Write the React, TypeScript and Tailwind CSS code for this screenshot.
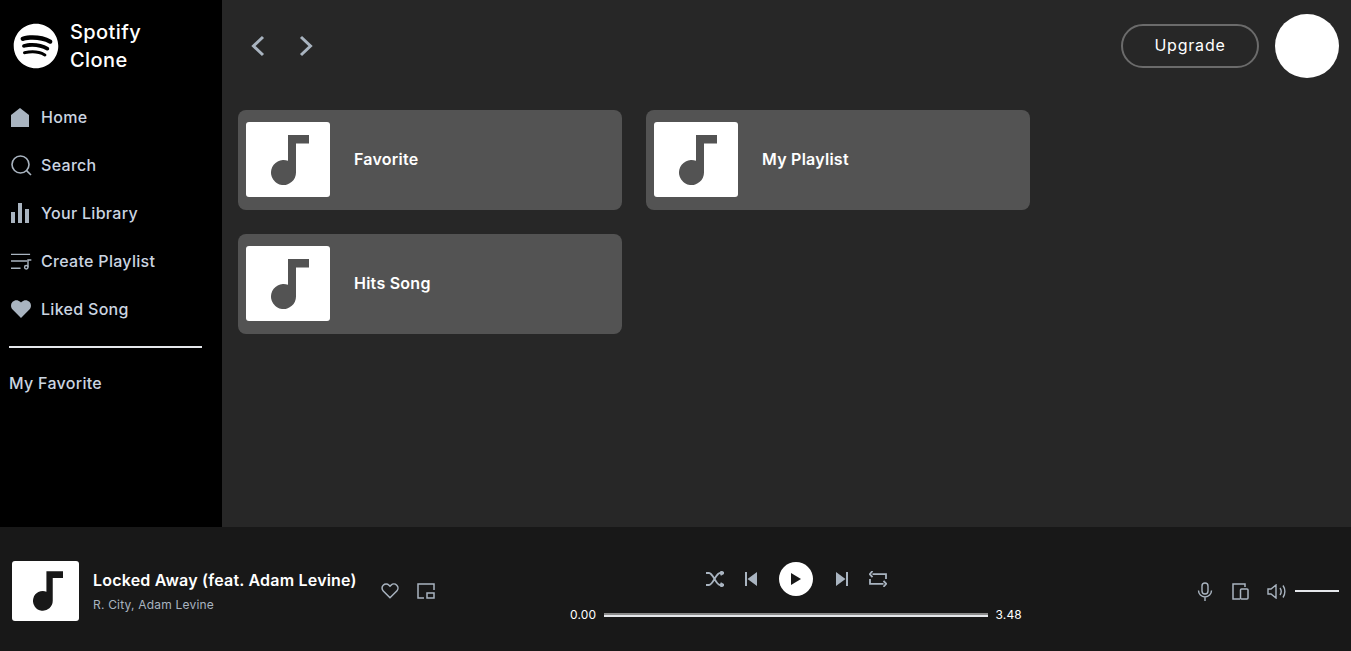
import { FaSpotify } from 'react-icons/fa'

const Note = ({ className }: { className: string }) => (
  <svg viewBox="0 0 38 50" className={className} fill="currentColor">
    <path d="M17 0h21v8.500H25v29a12.500 12.500 0 1 1-8-11.660V0z" />
  </svg>
)

const HomeIcon = () => (
  <svg viewBox="0 0 18 19" className="w-[18px] h-[19px]" fill="#a9b4c0">
    <path d="M9 0l9 7v12H0V7z" />
  </svg>
)

const SearchIcon = () => (
  <svg viewBox="0 0 21 21" className="w-[21px] h-[21px]" fill="none" stroke="#a9b4c0" strokeWidth="1.6">
    <circle cx="9.500" cy="9.500" r="8.500" />
    <path d="M15.600 15.600L20 20" />
  </svg>
)

const LibraryIcon = () => (
  <svg viewBox="0 0 18 20" className="w-[18px] h-[20px]" fill="#a9b4c0">
    <rect x="0" y="9" width="4" height="11" />
    <rect x="7" y="0" width="4" height="20" />
    <rect x="14" y="6" width="4" height="14" />
  </svg>
)

const PlaylistIcon = () => (
  <svg viewBox="0 0 22 17" className="w-[21px] h-[17px]" fill="none" stroke="#a9b4c0" strokeWidth="1.500">
    <path d="M0 1h20M0 8h17M0 15.500h10" />
    <circle cx="16" cy="14.500" r="1.800" />
    <path d="M17.800 14.500V7h3.500" />
  </svg>
)

const HeartIcon = () => (
  <svg viewBox="0 0 20 18" className="w-[20px] h-[18px]" fill="#a9b4c0">
    <path d="M10 18L1.600 9.600C-.5 7.500-.5 3.900 1.600 1.700c2.100-2.100 5.500-2.100 7.600 0L10 2.500l.8-.8c2.100-2.100 5.500-2.100 7.600 0 2.100 2.200 2.100 5.800 0 7.900z" />
  </svg>
)

const menuItems = [
  { icon: <HomeIcon />, label: 'Home' },
  { icon: <SearchIcon />, label: 'Search' },
  { icon: <LibraryIcon />, label: 'Your Library' },
  { icon: <PlaylistIcon />, label: 'Create Playlist' },
  { icon: <HeartIcon />, label: 'Liked Song' },
]

const Sidebar = () => (
  <aside className="w-[222px] shrink-0 bg-black pl-[9px] pr-[20px] pt-[18px]">
    <div className="flex items-center gap-[11px] pl-[4px] text-white">
      <FaSpotify className="w-[46px] h-[46px]" />
      <div className="text-[20px] leading-[28px] font-medium tracking-[0.4px]">
        <div>Spotify</div>
        <div>Clone</div>
      </div>
    </div>
    <nav className="mt-[19px]">
      {menuItems.map((item) => (
        <div key={item.label} className="flex items-center h-[48px] text-[#cbd5e1] text-[16px] font-medium tracking-[0.3px]">
          <div className="w-[32px] flex justify-start pl-[2px]">{item.icon}</div>
          <span>{item.label}</span>
        </div>
      ))}
    </nav>
    <div className="mt-[13px] h-[2px] bg-[#e5e7eb]" />
    <div className="mt-[23px] text-[#cbd5e1] text-[16px] font-medium leading-[24px] tracking-[0.3px]">My Favorite</div>
  </aside>
)

const Card = ({ title }: { title: string }) => (
  <div className="flex items-start h-[100px] bg-[#535353] rounded-lg pl-[8px] pt-[12px]">
    <div className="w-[84px] h-[75px] bg-white rounded-[3px] flex items-center justify-center text-[#535353]">
      <Note className="ml-[4px] w-[38px] h-[50px]" />
    </div>
    <span className="ml-[24px] mt-[25px] text-white text-[16px] leading-[24px] font-semibold tracking-[0.25px]">{title}</span>
  </div>
)

const Main = () => (
  <main className="flex-1 bg-[#272727] pl-[16px] pr-[12px]">
    <header className="flex items-center justify-between h-[92px]">
      <div className="flex items-center gap-[24px] pl-[8px]">
        <svg viewBox="0 0 24 24" className="w-[24px] h-[24px]" fill="none" stroke="#a9b4c0" strokeWidth="3">
          <path d="M17 3L7.500 12 17 21" />
        </svg>
        <svg viewBox="0 0 24 24" className="w-[24px] h-[24px]" fill="none" stroke="#a9b4c0" strokeWidth="3">
          <path d="M7 3l9.500 9L7 21" />
        </svg>
      </div>
      <div className="flex items-center gap-[16px]">
        <button className="w-[138px] h-[44px] rounded-full border-2 border-[#6b6b6b] text-white text-[16px] tracking-[0.8px] pb-[2px]">Upgrade</button>
        <div className="w-[64px] h-[64px] rounded-full bg-white" />
      </div>
    </header>
    <div className="grid grid-cols-[384px_384px] gap-[24px] mt-[18px]">
      <Card title="Favorite" />
      <Card title="My Playlist" />
      <Card title="Hits Song" />
    </div>
  </main>
)

const Player = () => (
  <footer className="h-[124px] shrink-0 bg-[#181818] flex items-center justify-between pl-[12px] pr-[12px] pt-[4px]">
    <div className="flex items-center w-[430px]">
      <div className="w-[67px] h-[60px] bg-white rounded-[3px] flex items-center justify-center text-[#181818]">
        <Note className="ml-[4px] w-[30px] h-[40px]" />
      </div>
      <div className="ml-[14px] mb-[2px]">
        <div className="text-white text-[16px] font-semibold leading-[24px] tracking-[0.2px]">Locked Away (feat. Adam Levine)</div>
        <div className="text-[#a9b4c0] text-[12px] leading-[16px] mt-[5px] tracking-[0.2px]">R. City, Adam Levine</div>
      </div>
      <svg viewBox="0 0 20 18" className="ml-[24px] w-[18px] h-[16px]" fill="none" stroke="#a9b4c0" strokeWidth="1.700">
        <path d="M10 16.500L2.400 9C.6 7.200.6 4.300 2.400 2.500c1.800-1.800 4.700-1.800 6.500 0l1.100 1.100 1.100-1.100c1.800-1.800 4.700-1.800 6.500 0 1.800 1.800 1.800 4.700 0 6.500z" />
      </svg>
      <svg viewBox="0 0 18 16" className="ml-[18px] w-[18px] h-[16px]" fill="none" stroke="#a9b4c0" strokeWidth="1.500">
        <path d="M7 15H1V1h16v6" />
        <rect x="10" y="10" width="7" height="5" />
      </svg>
    </div>
    <div className="flex flex-col items-center w-[452px] mt-[4px]">
      <div className="flex items-center">
        <svg viewBox="0 0 18 16" className="w-[18px] h-[16px]" fill="none" stroke="#a9b4c0" strokeWidth="1.800">
          <path d="M0 2h3c4 0 7 12 11 12h3M0 14h3c4 0 7-12 11-12h3M14.500 0L18 2l-3.500 2M14.500 12l3.500 2-3.500 2" />
        </svg>
        <svg viewBox="0 0 12 14" className="ml-[21px] w-[12px] h-[14px]" fill="#a9b4c0">
          <path d="M0 0h2v14H0zM12 0v14L2.500 7z" />
        </svg>
        <div className="ml-[22px] w-[34px] h-[34px] rounded-full bg-white flex items-center justify-center">
          <svg viewBox="0 0 10 12" className="w-[10px] h-[12px] ml-[1px]" fill="#181818">
            <path d="M0 0l10 6-10 6z" />
          </svg>
        </div>
        <svg viewBox="0 0 12 14" className="ml-[23px] w-[12px] h-[14px]" fill="#a9b4c0">
          <path d="M10 0h2v14h-2zM0 0v14l9.500-7z" />
        </svg>
        <svg viewBox="0 0 18 16" className="ml-[21px] w-[18px] h-[16px]" fill="none" stroke="#a9b4c0" strokeWidth="1.800">
          <path d="M14.500 12.800H1V8M3.500 3.200H17V8M3.500 0L.8 3.200l2.700 3M14.500 9.800l2.700 3-2.700 3" />
        </svg>
      </div>
      <div className="flex items-center mt-[10px] text-white text-[12px] w-full">
        <span className="w-[34px] text-left tracking-[0.2px]">0.00</span>
        <div className="flex-1 h-[4px] bg-[#e5e7eb] border-t-2 border-[#8a8a8a]" />
        <span className="w-[34px] text-right tracking-[0.2px]">3.48</span>
      </div>
    </div>
    <div className="flex items-center justify-end w-[189px]">
      <svg viewBox="0 0 16 19" className="w-[16px] h-[19px]" fill="none" stroke="#a9b4c0" strokeWidth="1.400">
        <rect x="5" y="1" width="6" height="11" rx="3" />
        <path d="M1.500 8.500a6.500 6.500 0 0 0 13 0M8 15v4" />
      </svg>
      <svg viewBox="0 0 17 17" className="ml-[19px] w-[17px] h-[17px]" fill="none" stroke="#a9b4c0" strokeWidth="1.500">
        <path d="M8 16H1V1h12v3" />
        <rect x="8.500" y="6" width="7.500" height="10" rx="1" />
      </svg>
      <svg viewBox="0 0 19 15" className="ml-[18px] w-[19px] h-[15px]" fill="none" stroke="#a9b4c0" strokeWidth="1.400">
        <path d="M1 5h3l5-4v13l-5-4H1zM13 4c1.400 2 1.400 5 0 7M16 1.500c2.500 3.500 2.500 8.500 0 12" />
      </svg>
      <div className="ml-[9px] w-[44px] h-[2px] bg-[#e5e7eb]" />
    </div>
  </footer>
)

export default function App() {
  return (
    <div className="w-full h-[651px] flex flex-col overflow-hidden font-['Inter','Liberation_Sans',sans-serif]">
      <div className="flex flex-1 min-h-0">
        <Sidebar />
        <Main />
      </div>
      <Player />
    </div>
  )
}
